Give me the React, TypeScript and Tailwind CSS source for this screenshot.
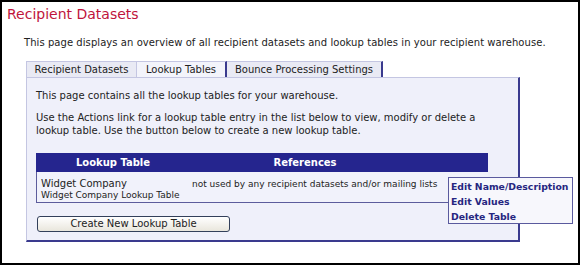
import React from "react";

export default function App() {
  return (
    <div className="relative w-[580px] h-[265px] border-2 border-black bg-white text-[#222] font-['DejaVu_Sans',sans-serif] text-[10px] leading-[13px] overflow-hidden">
      <h1 className="pl-[5px] pt-[4px] text-[14px] leading-[17px] text-[#c0143c]">Recipient Datasets</h1>
      <p className="pl-[22px] mt-[13px] tracking-[0.06px]">This page displays an overview of all recipient datasets and lookup tables in your recipient warehouse.</p>
      <div className="ml-[24px] mt-[12px] w-[494px]">
        <div className="flex h-[16px]">
          <div className="w-[111px] border border-b-0 border-[#c4c6e2] bg-[#e9eaf4] flex items-center justify-center">Recipient Datasets</div>
          <div className="w-[90px] border-t border-[#c4c6e2] border-r-2 border-r-[#3a3a8e] bg-[#f3f4fb] flex items-center justify-center">Lookup Tables</div>
          <div className="w-[156px] border-t border-[#c4c6e2] border-r-2 border-r-[#3a3a8e] bg-[#e9eaf4] flex items-center justify-center">Bounce Processing Settings</div>
        </div>
        <div className="h-[165px] border-t border-l border-[#c4c6e2] border-r-2 border-b-2 border-r-[#3a3a8e] border-b-[#3a3a8e] bg-[#eff0fa] pl-[9px] pt-[11px]">
          <p>This page contains all the lookup tables for your warehouse.</p>
          <p className="mt-[9px] w-[460px]">Use the Actions link for a lookup table entry in the list below to view, modify or delete a lookup table. Use the button below to create a new lookup table.</p>
          <div className="mt-[16px] w-[452px]">
            <div className="flex h-[19px] items-center bg-[#25258e] text-white font-bold">
              <div className="w-[154px] text-center">Lookup Table</div>
              <div className="w-[230px] text-center">References</div>
            </div>
            <div className="flex h-[31px] border-l border-b border-[#5c5c9c] bg-[#f1f2fb]">
              <div className="w-[153px] pl-[4px] pt-[6px]">
                <div className="leading-[12px]">Widget Company</div>
                <div className="text-[9px] leading-[11px]">Widget Company Lookup Table</div>
              </div>
              <div className="pt-[6px] pl-[2px] whitespace-nowrap leading-[12px] text-[9px]">not used by any recipient datasets and/or mailing lists</div>
            </div>
          </div>
          <button className="mt-[13px] ml-[1px] w-[193px] h-[16px] rounded-[3px] border border-[#33405a] bg-gradient-to-b from-white to-[#e9e6dc] text-[#222] text-[10px] leading-[14px]">Create New Lookup Table</button>
        </div>
      </div>
      <div className="absolute left-[446px] top-[175px] w-[125px] h-[47px] border border-[#5a5a9e] bg-[#f7f7fc] px-[2px] pt-[1px] font-bold text-[9.3px] leading-[15px] text-[#262680] whitespace-nowrap">
        <div>Edit Name/Description</div>
        <div>Edit Values</div>
        <div>Delete Table</div>
      </div>
    </div>
  );
}
